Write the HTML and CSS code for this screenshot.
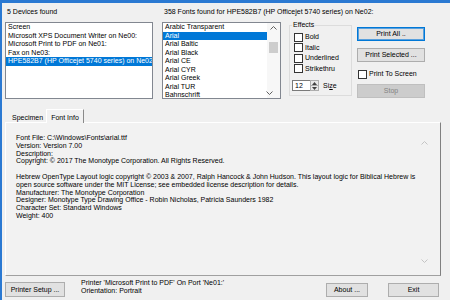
FILE: index.html
```html
<!DOCTYPE html>
<html lang="en">
<head>
    <meta charset="UTF-8" />
    <title>Font Printer</title>
    <link rel="stylesheet" href="styles.css">
</head>
<body>

    <div class="top">
        <div class="devices">
            <div class="caption">5 Devices found</div>
            <div class="listbox">
                <div class="item">Screen</div>
                <div class="item">Microsoft XPS Document Writer on Ne00:</div>
                <div class="item">Microsoft Print to PDF on Ne01:</div>
                <div class="item">Fax on Ne03:</div>
                <div class="item selected">HPE582B7 (HP Officejet 5740 series) on Ne02</div>
            </div>
        </div>

        <div class="fonts">
            <div class="caption">358 Fonts found for HPE582B7 (HP Officejet 5740 series) on Ne02:</div>
            <div class="listbox font-list">
                <div class="items">
                    <div class="item">Arabic Transparent</div>
                    <div class="item selected">Arial</div>
                    <div class="item">Arial Baltic</div>
                    <div class="item">Arial Black</div>
                    <div class="item">Arial CE</div>
                    <div class="item">Arial CYR</div>
                    <div class="item">Arial Greek</div>
                    <div class="item">Arial TUR</div>
                    <div class="item">Bahnschrift</div>
                </div>
                <div class="vscroll">
                    <div class="arrow">
                        <svg width="7" height="4" viewBox="0 0 7 4"><polyline points="0.5,3.5 3.5,0.5 6.5,3.5" fill="none" stroke="#606060" stroke-width="1"/></svg>
                    </div>
                    <div class="thumb"></div>
                    <div class="arrow bottom">
                        <svg width="7" height="4" viewBox="0 0 7 4"><polyline points="0.5,0.5 3.5,3.5 6.5,0.5" fill="none" stroke="#606060" stroke-width="1"/></svg>
                    </div>
                </div>
            </div>
        </div>

        <fieldset class="effects">
            <legend>Effects</legend>
            <div class="check-row first"><span class="box"></span>Bold</div>
            <div class="check-row"><span class="box"></span>Italic</div>
            <div class="check-row"><span class="box"></span>Underlined</div>
            <div class="check-row"><span class="box"></span>Strikethru</div>
            <div class="spinner">
                <div class="spin-edit">12</div>
                <div class="spin-btns">
                    <div class="spin-btn">
                        <svg width="5" height="3" viewBox="0 0 5 3"><polygon points="0,3 2.5,0 5,3" fill="#404040"/></svg>
                    </div>
                    <div class="spin-btn">
                        <svg width="5" height="3" viewBox="0 0 5 3"><polygon points="0,0 2.5,3 5,0" fill="#404040"/></svg>
                    </div>
                </div>
                <span class="spin-label">Si<u>z</u>e</span>
            </div>
        </fieldset>

        <div class="actions">
            <div class="btn btn-default">Print All ..</div>
            <div class="btn gap">Print Selected ...</div>
            <div class="check-row screen"><span class="box"></span>Print To Screen</div>
            <div class="btn btn-disabled">Stop</div>
        </div>
    </div>

    <div class="tabs">
        <div class="tab">Specimen</div>
        <div class="tab active">Font Info</div>
    </div>

    <div class="panel">
        <div class="info-text">
            <div>Font File: C:\Windows\Fonts\arial.ttf</div>
            <div>Version: Version 7.00</div>
            <div>Description:</div>
            <div>Copyright: © 2017 The Monotype Corporation. All Rights Reserved.</div>
            <div class="blank"></div>
            <div>Hebrew OpenType Layout logic copyright © 2003 &amp; 2007, Ralph Hancock &amp; John Hudson. This layout logic for Biblical Hebrew is</div>
            <div>open source software under the MIT License; see embedded license description for details.</div>
            <div>Manufacturer: The Monotype Corporation</div>
            <div>Designer: Monotype Type Drawing Office - Robin Nicholas, Patricia Saunders 1982</div>
            <div>Character Set: Standard Windows</div>
            <div>Weight: 400</div>
        </div>
        <div class="info-scroll">
            <div class="arrow">
                <svg width="7" height="4" viewBox="0 0 7 4"><polyline points="0.5,3.5 3.5,0.5 6.5,3.5" fill="none" stroke="#c4c4c4" stroke-width="1"/></svg>
            </div>
            <div class="arrow">
                <svg width="7" height="4" viewBox="0 0 7 4"><polyline points="0.5,0.5 3.5,3.5 6.5,0.5" fill="none" stroke="#c4c4c4" stroke-width="1"/></svg>
            </div>
        </div>
    </div>

    <div class="bottom">
        <div class="btn setup">Printer Setup ...</div>
        <div class="status">
            <div>Printer 'Microsoft Print to PDF' On Port 'Ne01:'</div>
            <div>Orientation: Portrait</div>
        </div>
        <div class="btn about">About ...</div>
        <div class="btn exit">Exit</div>
    </div>

</body>
</html>
```

FILE: styles.css
```css
* {
    box-sizing: border-box;
}

body {
    margin: 0;
    width: 450px;
    height: 300px;
    overflow: hidden;
    background: #f0f0f0;
    border-top: 3px solid #2b79d2;
    border-left: 2px solid #2b79d2;
    font-family: "Liberation Sans", Arial, sans-serif;
    font-size: 7px;
    line-height: 8px;
    color: #000;
}

/* --- top row: devices, fonts, effects, buttons --- */
.top {
    display: flex;
    align-items: flex-start;
    padding: 5px 0 0 3px;
}

.caption {
    height: 8px;
    margin-bottom: 6px;
    padding-left: 2px;
    white-space: nowrap;
}

.devices {
    width: 148px;
}

.fonts {
    width: 119px;
    margin-left: 9px;
}

.listbox {
    height: 77px;
    background: #fff;
    border: 1px solid #828790;
    overflow: hidden;
}

.item {
    height: 8.5px;
    line-height: 8.5px;
    padding-left: 2px;
    white-space: nowrap;
    overflow: hidden;
}

.item.selected {
    background: #0078d7;
    color: #fff;
}

.font-list {
    display: flex;
}

.font-list .items {
    flex: 1;
    min-width: 0;
}

.vscroll {
    width: 13px;
    display: flex;
    flex-direction: column;
    align-items: center;
    background: #f7f7f7;
}

.vscroll .arrow {
    height: 10px;
    display: flex;
    align-items: center;
    justify-content: center;
}

.vscroll .thumb {
    width: 9px;
    height: 11px;
    margin-top: 9px;
    background: #cdcdcd;
}

.vscroll .bottom {
    margin-top: auto;
}

.effects {
    width: 63px;
    min-width: 0;
    margin: 13px 0 0 8px;
    padding: 0 0 4px 4px;
    border: 1px solid #dcdcdc;
}

.effects legend {
    padding: 0 1px;
    margin-left: -2px;
    line-height: 8px;
}

.check-row {
    display: flex;
    align-items: center;
    height: 10.5px;
    white-space: nowrap;
}

.check-row.first {
    margin-top: 3px;
}

.box {
    width: 9px;
    height: 9px;
    margin-right: 2px;
    background: #fff;
    border: 1px solid #333;
    flex-shrink: 0;
}

.spinner {
    display: flex;
    align-items: center;
    margin: 6px 0 0 -2px;
    height: 11px;
}

.spin-edit {
    width: 18px;
    height: 11px;
    line-height: 9px;
    padding-left: 2px;
    background: #fff;
    border: 1px solid #7a7a7a;
    border-right: none;
}

.spin-btns {
    width: 9px;
    height: 11px;
    display: flex;
    flex-direction: column;
    border: 1px solid #adadad;
    background: #e8e8e8;
}

.spin-btn {
    flex: 1;
    display: flex;
    align-items: center;
    justify-content: center;
}

.spin-btn + .spin-btn {
    border-top: 1px solid #adadad;
}

.spin-label {
    margin-left: 4px;
}

.actions {
    width: 68px;
    margin: 19px 0 0 5px;
}

.btn {
    height: 14px;
    display: flex;
    align-items: center;
    justify-content: center;
    background: #e1e1e1;
    border: 1px solid #adadad;
    white-space: nowrap;
}

.btn-default {
    border-color: #0078d7;
    box-shadow: inset 0 0 0 1px #5aa0dc;
}

.btn.gap {
    margin-top: 7px;
}

.check-row.screen {
    height: 10px;
    margin: 7px 0 0 1px;
}

.btn-disabled {
    margin-top: 5px;
    background: #cccccc;
    border-color: #bfbfbf;
    color: #838383;
}

/* --- tabs and info panel --- */
.tabs {
    display: flex;
    align-items: flex-start;
    height: 13px;
    margin: 10px 0 0 5px;
    position: relative;
    z-index: 1;
}

.tab {
    height: 11px;
    margin-top: 2px;
    padding: 3px 3px 0 5px;
    white-space: nowrap;
}

.tab.active {
    height: 14px;
    margin-top: 0;
    padding: 4px 4px 0 4px;
    background: #f2f2f2;
    border-top: 1px solid #fff;
    border-left: 1px solid #fff;
    border-right: 1px solid #8a8a8a;
}

.panel {
    display: flex;
    width: 436px;
    height: 154px;
    margin-left: 3px;
    background: #f2f2f2;
    border-top: 1px solid #fff;
    border-left: 1px solid #fff;
    border-right: 1px solid #808080;
    border-bottom: 1px solid #a0a0a0;
}

.info-text {
    flex: 1;
    padding: 11px 0 0 10px;
    line-height: 7.8px;
    white-space: nowrap;
    overflow: hidden;
}

.info-text .blank {
    height: 7.8px;
}

.info-scroll {
    width: 13px;
    margin: 13px 9px 8px 0;
    display: flex;
    flex-direction: column;
    justify-content: space-between;
}

.info-scroll .arrow {
    height: 13px;
    display: flex;
    align-items: center;
    justify-content: center;
}

/* --- bottom row --- */
.bottom {
    display: flex;
    align-items: flex-start;
    margin-top: 3px;
    padding: 0 11px 0 3px;
}

.setup {
    width: 60px;
    height: 15px;
    margin-top: 3px;
}

.status {
    margin-left: 16px;
    white-space: nowrap;
}

.about {
    width: 42px;
    margin: 4px 0 0 auto;
}

.exit {
    width: 51px;
    margin: 4px 0 0 20px;
}
```
